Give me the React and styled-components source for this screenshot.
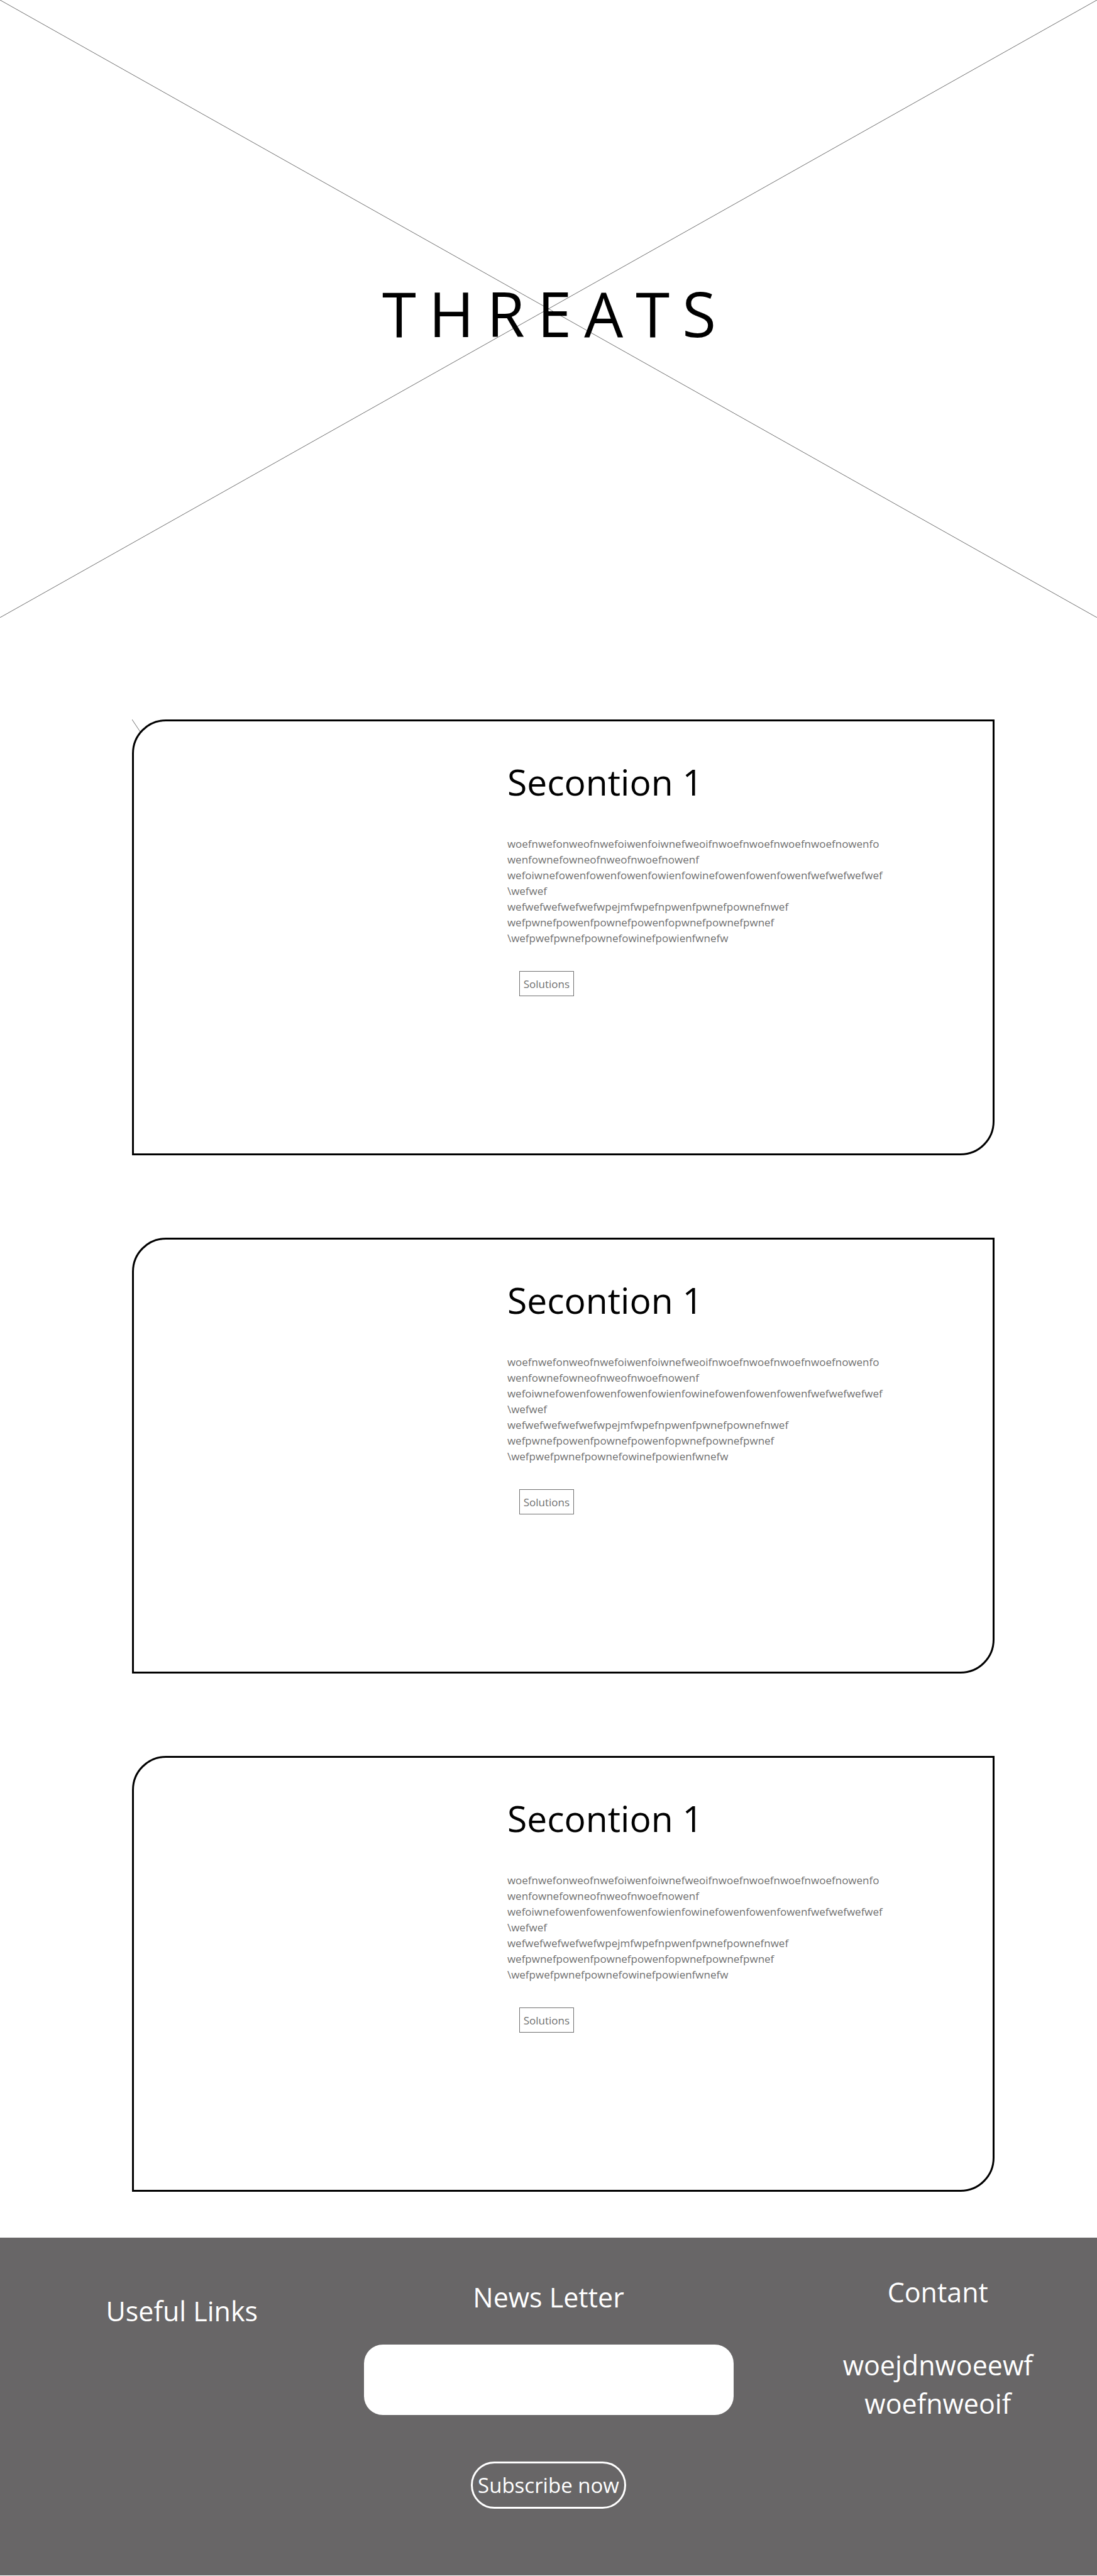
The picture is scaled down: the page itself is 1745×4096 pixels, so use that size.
import React from "react";
import styled, { createGlobalStyle } from "styled-components";

const GlobalStyle = createGlobalStyle`
  *, *::before, *::after { box-sizing: border-box; }
  body {
    margin: 0;
    background: #fff;
    color: #000;
    font-family: "Segoe UI", "Open Sans", "Noto Sans", sans-serif;
  }
  h1, h2, p { margin: 0; font-weight: 400; }
`;

const Hero = styled.header`
  position: relative;
  display: flex;
  align-items: center;
  justify-content: center;
  height: 982px;
`;

const HeroCross = styled.svg`
  position: absolute;
  inset: 0;
  width: 100%;
  height: 100%;
`;

const HeroTitle = styled.h1`
  position: relative;
  padding: 13px 0 0 22px;
  font-size: 98px;
  line-height: 132px;
  letter-spacing: 20px;
`;

const Main = styled.main`
  display: flex;
  flex-direction: column;
  gap: 131px;
  padding: 162px 163px 73px 210px;
`;

const CardFrame = styled.div`
  position: relative;
`;

const CornerLine = styled.svg`
  position: absolute;
  top: 0;
  left: 0;
`;

const Card = styled.section`
  position: relative;
  display: grid;
  grid-template-columns: 10fr 13fr;
  min-height: 693px;
  border: 3px solid #000;
  border-radius: 54px 0;
  background: #fff;
`;

const CardBody = styled.div`
  grid-column: 2;
  padding-top: 56px;
`;

const CardTitle = styled.h2`
  font-size: 57px;
  line-height: 80px;
`;

const CardText = styled.p`
  padding-top: 46px;
  color: #707070;
  font-size: 17px;
  line-height: 25px;
`;

const TextLine = styled.span`
  display: block;
`;

const SolutionsButton = styled.button`
  width: 87px;
  height: 40px;
  margin: 40px 0 0 19px;
  padding: 0;
  border: 1px solid #707070;
  background: #fff;
  color: #707070;
  font: inherit;
  font-size: 17px;
`;

const Footer = styled.footer`
  display: grid;
  grid-template-columns: 1fr 588px 1fr;
  height: 537px;
  margin-bottom: 1px;
  background: #686667;
  color: #fff;
  text-align: center;
`;

const FooterColumn = styled.div`
  display: flex;
  flex-direction: column;
  align-items: center;
  padding-top: ${(p) => p.$top}px;
  padding-left: ${(p) => p.$left || 0}px;
`;

const NewsForm = styled.form`
  display: flex;
  flex-direction: column;
  align-items: center;
  padding-top: 64px;
`;

const FooterTitle = styled.h2`
  font-size: 43px;
  line-height: 61px;
`;

const FooterLabel = styled.label`
  font-size: 43px;
  line-height: 61px;
`;

const EmailInput = styled.input`
  width: 100%;
  height: 112px;
  margin-top: 45px;
  padding: 0 30px;
  border: 0;
  border-radius: 30px;
  background: #fff;
  font: inherit;
  font-size: 33px;
`;

const SubscribeButton = styled.button`
  width: 247px;
  height: 75px;
  margin-top: 74px;
  padding: 0;
  border: 3px solid #fff;
  border-radius: 38px;
  background: transparent;
  color: #fff;
  font: inherit;
  font-size: 33px;
`;

const Address = styled.p`
  padding-top: 55px;
  font-size: 43px;
  line-height: 61px;
`;

const lines = [
  "woefnwefonweofnwefoiwenfoiwnefweoifnwoefnwoefnwoefnwoefnowenfo",
  "wenfownefowneofnweofnwoefnowenf",
  "wefoiwnefowenfowenfowenfowienfowinefowenfowenfowenfwefwefwefwef",
  "\\wefwef",
  "wefwefwefwefwefwpejmfwpefnpwenfpwnefpownefnwef",
  "wefpwnefpowenfpownefpowenfopwnefpownefpwnef",
  "\\wefpwefpwnefpownefowinefpowienfwnefw",
];

const sections = [
  { id: 1, title: "Secontion 1", cornerLine: true },
  { id: 2, title: "Secontion 1" },
  { id: 3, title: "Secontion 1" },
];

function ThreatCard({ title, cornerLine }) {
  return (
    <CardFrame>
      {cornerLine && (
        <CornerLine width="40" height="60" viewBox="0 0 40 60" aria-hidden="true">
          <path d="M0 0L40 60" stroke="#707070" strokeWidth="1" />
        </CornerLine>
      )}
      <Card>
        <CardBody>
          <CardTitle>{title}</CardTitle>
          <CardText>
            {lines.map((line) => (
              <TextLine key={line}>{line}</TextLine>
            ))}
          </CardText>
          <SolutionsButton type="button">Solutions</SolutionsButton>
        </CardBody>
      </Card>
    </CardFrame>
  );
}

export default function App() {
  return (
    <>
      <GlobalStyle />
      <Hero>
        <HeroCross viewBox="0 0 1920 1080" preserveAspectRatio="none" aria-hidden="true">
          <path
            d="M0 0L1920 1080M0 1080L1920 0"
            stroke="#707070"
            strokeWidth="1"
            vectorEffect="non-scaling-stroke"
          />
        </HeroCross>
        <HeroTitle>THREATS</HeroTitle>
      </Hero>
      <Main>
        {sections.map((s) => (
          <ThreatCard key={s.id} title={s.title} cornerLine={s.cornerLine} />
        ))}
      </Main>
      <Footer>
        <FooterColumn $top={86}>
          <FooterTitle>Useful Links</FooterTitle>
        </FooterColumn>
        <NewsForm onSubmit={(e) => e.preventDefault()}>
          <FooterLabel htmlFor="newsletter">News Letter</FooterLabel>
          <EmailInput id="newsletter" type="email" />
          <SubscribeButton type="submit">Subscribe now</SubscribeButton>
        </NewsForm>
        <FooterColumn $top={56} $left={72}>
          <FooterTitle>Contant</FooterTitle>
          <Address>
            <TextLine>woejdnwoeewf</TextLine>
            <TextLine>woefnweoif</TextLine>
          </Address>
        </FooterColumn>
      </Footer>
    </>
  );
}
